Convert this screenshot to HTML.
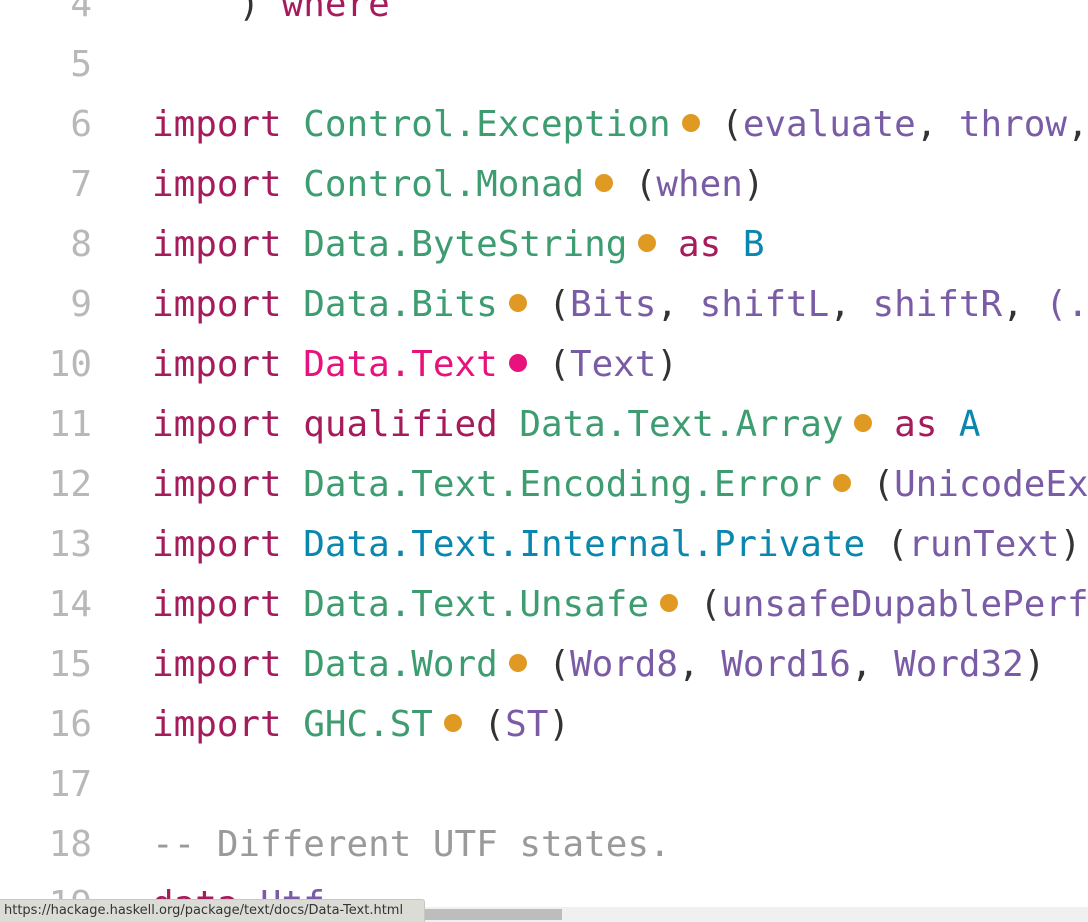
<!DOCTYPE html>
<html><head><style>
html,body{margin:0;padding:0;background:#fff;width:1088px;height:922px;overflow:hidden;position:relative}
.l{position:absolute;left:0;height:60px;line-height:60px;font-family:"DejaVu Sans Mono","Liberation Mono",monospace;font-size:35.9px;white-space:pre;color:#333;margin-top:2px}
.n{position:absolute;left:0;width:92px;text-align:right;color:#b8b8b8}
.c{position:absolute;left:152px}
.k{color:#a61b5c}.m{color:#3d9c70}.p{color:#7a5ca6}.b{color:#0a87ae}.h{color:#e8127c}.g{color:#9a9a9a}
.d{display:inline-block;width:18px;height:18px;border-radius:50%;background:#e09a24;margin-left:11px;vertical-align:middle;position:relative;top:-3px}
.d.h2{background:#e8127c}
</style></head><body>
<div class="l" style="top:-27px"><span class="n">4</span><span class="c">    ) <span class="k">where</span></span></div>
<div class="l" style="top:33px"><span class="n">5</span></div>
<div class="l" style="top:93px"><span class="n">6</span><span class="c"><span class="k">import</span> <span class="m">Control.Exception</span><span class="d"></span> (<span class="p">evaluate</span>, <span class="p">throw</span>, </span></div>
<div class="l" style="top:153px"><span class="n">7</span><span class="c"><span class="k">import</span> <span class="m">Control.Monad</span><span class="d"></span> (<span class="p">when</span>)</span></div>
<div class="l" style="top:213px"><span class="n">8</span><span class="c"><span class="k">import</span> <span class="m">Data.ByteString</span><span class="d"></span> <span class="k">as</span> <span class="b">B</span></span></div>
<div class="l" style="top:273px"><span class="n">9</span><span class="c"><span class="k">import</span> <span class="m">Data.Bits</span><span class="d"></span> (<span class="p">Bits</span>, <span class="p">shiftL</span>, <span class="p">shiftR</span>, <span class="p">(.</span></span></div>
<div class="l" style="top:333px"><span class="n">10</span><span class="c"><span class="k">import</span> <span class="h">Data.Text</span><span class="d h2"></span> (<span class="p">Text</span>)</span></div>
<div class="l" style="top:393px"><span class="n">11</span><span class="c"><span class="k">import</span> <span class="k">qualified</span> <span class="m">Data.Text.Array</span><span class="d"></span> <span class="k">as</span> <span class="b">A</span></span></div>
<div class="l" style="top:453px"><span class="n">12</span><span class="c"><span class="k">import</span> <span class="m">Data.Text.Encoding.Error</span><span class="d"></span> (<span class="p">UnicodeEx</span></span></div>
<div class="l" style="top:513px"><span class="n">13</span><span class="c"><span class="k">import</span> <span class="b">Data.Text.Internal.Private</span> (<span class="p">runText</span>)</span></div>
<div class="l" style="top:573px"><span class="n">14</span><span class="c"><span class="k">import</span> <span class="m">Data.Text.Unsafe</span><span class="d"></span> (<span class="p">unsafeDupablePerf</span></span></div>
<div class="l" style="top:633px"><span class="n">15</span><span class="c"><span class="k">import</span> <span class="m">Data.Word</span><span class="d"></span> (<span class="p">Word8</span>, <span class="p">Word16</span>, <span class="p">Word32</span>)</span></div>
<div class="l" style="top:693px"><span class="n">16</span><span class="c"><span class="k">import</span> <span class="m">GHC.ST</span><span class="d"></span> (<span class="p">ST</span>)</span></div>
<div class="l" style="top:753px"><span class="n">17</span></div>
<div class="l" style="top:813px"><span class="n">18</span><span class="c"><span class="g">-- Different UTF states.</span></span></div>
<div class="l" style="top:873px"><span class="n">19</span><span class="c"><span class="k">data</span> <span class="p">Utf</span> <span class="k">=</span></span></div>
<div style="position:absolute;left:0;top:907px;width:1088px;height:15px;background:#f0f0f0"></div>
<div style="position:absolute;left:360px;top:909px;width:202px;height:11px;background:#bdbdbd"></div>
<div style="position:absolute;left:0;top:899px;width:425px;height:23px;background:#dcdcd6;border:1px solid #c8c8c2;border-left:none;border-bottom:none;border-radius:0 3px 0 0;box-sizing:border-box;font-family:'DejaVu Sans',sans-serif;font-size:13px;line-height:22px;color:#333;padding-left:4px;white-space:nowrap">https://hackage.haskell.org/package/text/docs/Data-Text.html</div>
</body></html>
